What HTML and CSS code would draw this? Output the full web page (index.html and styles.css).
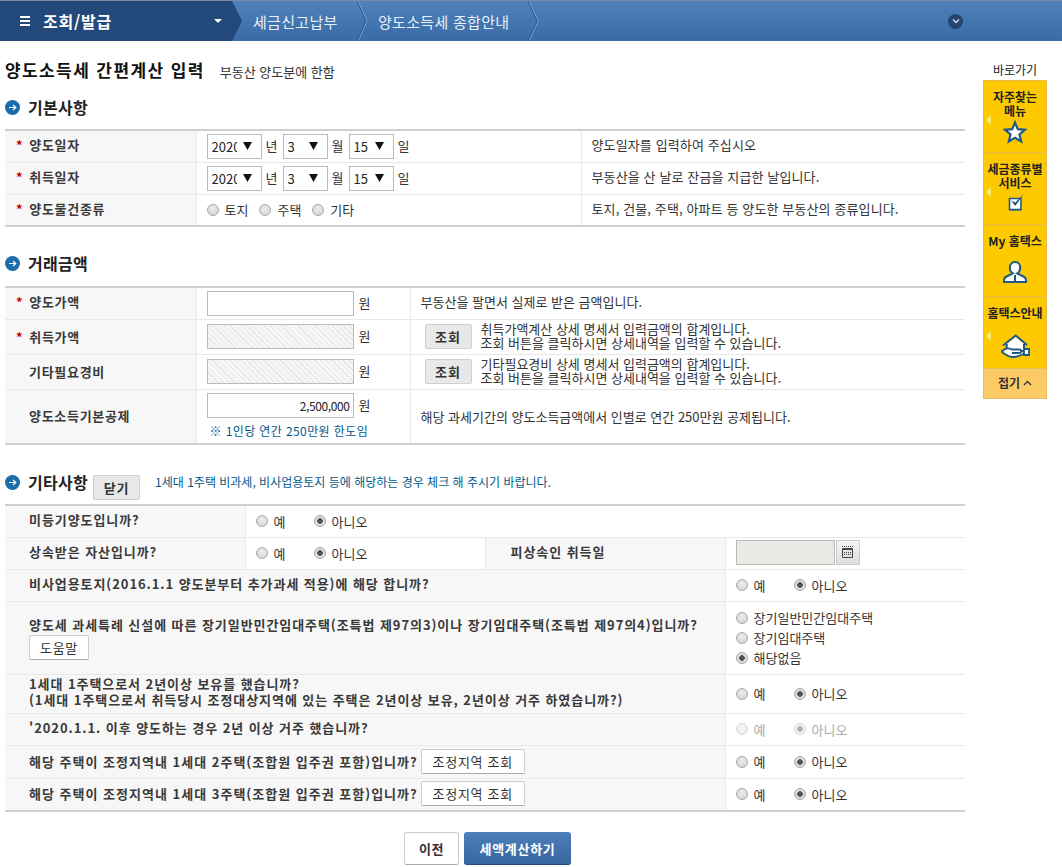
FILE: index.html
```html
<!DOCTYPE html>
<html lang="ko">
<head>
<meta charset="utf-8">
<title>양도소득세 간편계산 입력</title>
<link rel="stylesheet" href="styles.css">
</head>
<body>
<header class="topbar">
  <div class="crumb-main">
    <span class="burger"><i></i><i></i><i></i></span>
    <span class="crumb-main-text">조회/발급</span>
    <span class="caret"></span>
  </div>
  <div class="crumb crumb-1">세금신고납부<svg class="chev" width="11" height="40" viewBox="0 0 11 40"><path d="M1 0 10 20 1 40" fill="none" stroke="#7fa5d0" stroke-width="1"/><path d="M0 0 9 20 0 40" fill="none" stroke="#2a5788" stroke-width="1"/></svg></div>
  <div class="crumb crumb-2">양도소득세 종합안내<svg class="chev" width="11" height="40" viewBox="0 0 11 40"><path d="M1 0 10 20 1 40" fill="none" stroke="#7fa5d0" stroke-width="1"/><path d="M0 0 9 20 0 40" fill="none" stroke="#2a5788" stroke-width="1"/></svg></div>
  <div class="crumb-rest">
    <span class="round-down"><svg width="14" height="14" viewBox="0 0 14 14"><path d="M4 5.500 7 8.500 10 5.500" fill="none" stroke="#d5dee8" stroke-width="1.300"/></svg></span>
  </div>
</header>

<div class="page">
<main class="main">
  <div class="title-row"><h1>양도소득세 간편계산 입력</h1><span class="title-sub">부동산 양도분에 한함</span></div>

  <h2 class="sec sec-first"><svg class="sec-ico" width="15" height="15" viewBox="0 0 15 15"><circle cx="7.500" cy="7.500" r="7.500" fill="#1b6ca8"/><path d="M4 7.500H10.500M8 5 10.800 7.500 8 10" fill="none" stroke="#fff" stroke-width="1.200"/></svg>기본사항</h2>
  <table class="tbl t1">
    <colgroup><col class="c1a"><col class="c1b"><col></colgroup>
    <tr>
      <th><em>*</em>양도일자</th>
      <td><div class="date-row"><select class="sel sel-y"><option>2020</option></select><span>년</span><select class="sel sel-m"><option>3</option></select><span>월</span><select class="sel sel-d"><option>15</option></select><span>일</span></div></td>
      <td class="desc">양도일자를 입력하여 주십시오</td>
    </tr>
    <tr>
      <th><em>*</em>취득일자</th>
      <td><div class="date-row"><select class="sel sel-y"><option>2020</option></select><span>년</span><select class="sel sel-m"><option>3</option></select><span>월</span><select class="sel sel-d"><option>15</option></select><span>일</span></div></td>
      <td class="desc">부동산을 산 날로 잔금을 지급한 날입니다.</td>
    </tr>
    <tr>
      <th><em>*</em>양도물건종류</th>
      <td><div class="radios r-tight"><label><input type="radio" name="k">토지</label><label><input type="radio" name="k">주택</label><label><input type="radio" name="k">기타</label></div></td>
      <td class="desc">토지, 건물, 주택, 아파트 등 양도한 부동산의 종류입니다.</td>
    </tr>
  </table>

  <h2 class="sec sec-second"><svg class="sec-ico" width="15" height="15" viewBox="0 0 15 15"><circle cx="7.500" cy="7.500" r="7.500" fill="#1b6ca8"/><path d="M4 7.500H10.500M8 5 10.800 7.500 8 10" fill="none" stroke="#fff" stroke-width="1.200"/></svg>거래금액</h2>
  <table class="tbl t2">
    <colgroup><col class="c1a"><col class="c2b"><col></colgroup>
    <tr class="h32">
      <th><em>*</em>양도가액</th>
      <td><div class="amt"><input class="inp" type="text"><span>원</span></div></td>
      <td class="desc">부동산을 팔면서 실제로 받은 금액입니다.</td>
    </tr>
    <tr class="h35">
      <th><em>*</em>취득가액</th>
      <td><div class="amt"><input class="inp inp-off" type="text" disabled><span>원</span></div></td>
      <td class="desc"><div class="desc-btn"><button class="btn-gray" type="button">조회</button><p>취득가액계산 상세 명세서 입력금액의 합계입니다.<br>조회 버튼을 클릭하시면 상세내역을 입력할 수 있습니다.</p></div></td>
    </tr>
    <tr class="h35">
      <th class="no-req">기타필요경비</th>
      <td><div class="amt"><input class="inp inp-off" type="text" disabled><span>원</span></div></td>
      <td class="desc"><div class="desc-btn"><button class="btn-gray" type="button">조회</button><p>기타필요경비 상세 명세서 입력금액의 합계입니다.<br>조회 버튼을 클릭하시면 상세내역을 입력할 수 있습니다.</p></div></td>
    </tr>
    <tr class="h55">
      <th class="no-req">양도소득기본공제</th>
      <td><div class="amt"><input class="inp inp-num" type="text" value="2,500,000"><span>원</span></div><div class="limit">※ 1인당 연간 250만원 한도임</div></td>
      <td class="desc">해당 과세기간의 양도소득금액에서 인별로 연간 250만원 공제됩니다.</td>
    </tr>
  </table>

  <div class="sec-row">
    <h2 class="sec sec-inline"><svg class="sec-ico" width="15" height="15" viewBox="0 0 15 15"><circle cx="7.500" cy="7.500" r="7.500" fill="#1b6ca8"/><path d="M4 7.500H10.500M8 5 10.800 7.500 8 10" fill="none" stroke="#fff" stroke-width="1.200"/></svg>기타사항</h2>
    <button class="btn-gray btn-close" type="button">닫기</button>
    <span class="sec-note">1세대 1주택 비과세, 비사업용토지 등에 해당하는 경우 체크 해 주시기 바랍니다.</span>
  </div>
  <table class="tbl t3">
    <colgroup><col class="c3"><col class="c3"><col class="c3"><col></colgroup>
    <tr class="h32">
      <th class="no-req">미등기양도입니까?</th>
      <td colspan="3"><div class="radios r-yn"><label><input type="radio" name="a">예</label><label><input type="radio" name="a" checked>아니오</label></div></td>
    </tr>
    <tr class="h32">
      <th class="no-req">상속받은 자산입니까?</th>
      <td><div class="radios r-yn"><label><input type="radio" name="b">예</label><label><input type="radio" name="b" checked>아니오</label></div></td>
      <th class="th-sub">피상속인 취득일</th>
      <td class="td-cal"><div class="cal"><input class="inp-cal" type="text" disabled><button class="cal-btn" type="button" aria-label="달력"><svg width="11" height="12" viewBox="0 0 11 12"><path d="M0 .5h1M2 .5h1M4 .5h1M6 .5h1M8 .5h1M10 .5h1" stroke="#444"/><path d="M.5 2.500h10v9H.5z" fill="#e4e4e4" stroke="#444"/><path d="M.5 3.500h10" stroke="#444"/><path d="M2 6.500h7M2 8.500h7" stroke="#444" stroke-dasharray="1 1"/></svg></button></div></td>
    </tr>
    <tr class="h32">
      <th class="no-req" colspan="3">비사업용토지(2016.1.1 양도분부터 추가과세 적용)에 해당 합니까?</th>
      <td><div class="radios r-yn"><label><input type="radio" name="c">예</label><label><input type="radio" name="c" checked>아니오</label></div></td>
    </tr>
    <tr class="h73">
      <th class="no-req th-help" colspan="3">양도세 과세특례 신설에 따른 장기일반민간임대주택(조특법 제97의3)이나 장기임대주택(조특법 제97의4)입니까?<br><button class="btn-white btn-help" type="button">도움말</button></th>
      <td><div class="radios r-col"><label><input type="radio" name="d">장기일반민간임대주택</label><label><input type="radio" name="d">장기임대주택</label><label><input type="radio" name="d" checked>해당없음</label></div></td>
    </tr>
    <tr class="h39">
      <th class="no-req th-tight" colspan="3">1세대 1주택으로서 2년이상 보유를 했습니까?<br>(1세대 1주택으로서 취득당시 조정대상지역에 있는 주택은 2년이상 보유, 2년이상 거주 하였습니까?)</th>
      <td><div class="radios r-yn"><label><input type="radio" name="e">예</label><label><input type="radio" name="e" checked>아니오</label></div></td>
    </tr>
    <tr class="h32">
      <th class="no-req" colspan="3">'2020.1.1. 이후 양도하는 경우 2년 이상 거주 했습니까?</th>
      <td><div class="radios r-yn r-off"><label><input type="radio" name="f" disabled>예</label><label><input type="radio" name="f" checked disabled>아니오</label></div></td>
    </tr>
    <tr class="h33">
      <th class="no-req th-q" colspan="3"><span class="q-btn">해당 주택이 조정지역내 1세대 2주택(조합원 입주권 포함)입니까?<button class="btn-white btn-area" type="button">조정지역 조회</button></span></th>
      <td><div class="radios r-yn"><label><input type="radio" name="g">예</label><label><input type="radio" name="g" checked>아니오</label></div></td>
    </tr>
    <tr class="h33">
      <th class="no-req th-q" colspan="3"><span class="q-btn">해당 주택이 조정지역내 1세대 3주택(조합원 입주권 포함)입니까?<button class="btn-white btn-area" type="button">조정지역 조회</button></span></th>
      <td><div class="radios r-yn"><label><input type="radio" name="h">예</label><label><input type="radio" name="h" checked>아니오</label></div></td>
    </tr>
  </table>

  <div class="actions">
    <button class="btn-prev" type="button">이전</button>
    <button class="btn-calc" type="button">세액계산하기</button>
  </div>
</main>

<aside class="quick">
  <div class="quick-title">바로가기</div>
  <a class="q-item"><span class="q-tri"></span><span class="q-text">자주찾는<br>메뉴</span>
    <svg class="q-ico" width="24" height="24" viewBox="0 0 24 24"><path d="M12 2.500 14.800 9.200 22 9.800 16.500 14.500 18.200 21.500 12 17.800 5.800 21.500 7.500 14.500 2 9.800 9.200 9.200Z" fill="#fff" stroke="#1f5a85" stroke-width="2.200"/></svg></a>
  <a class="q-item"><span class="q-tri"></span><span class="q-text">세금종류별<br>서비스</span>
    <svg class="q-ico" width="24" height="24" viewBox="0 0 24 24"><path d="M6.500 6.500h11.500v11H6.500z" fill="#fff" stroke="#1f5a85" stroke-width="1.600"/><path d="M6 17h12.500v1.500H6z" fill="#1f5a85"/><path d="M8 8.500 12.200 14 21 2 12.200 10.500Z" fill="#1f5a85"/></svg></a>
  <a class="q-item"><span class="q-text">My 홈택스</span>
    <svg class="q-ico q-person" width="26" height="26" viewBox="0 0 26 26"><path d="M13 2c3.200 0 5.200 2.400 5.200 5.400 0 2.600-1.400 5-3 6l6.300 3.100c1.600.8 2.500 2 2.500 3.500v2H2v-2c0-1.500.9-2.700 2.500-3.500l6.300-3.100c-1.600-1-3-3.400-3-6C7.800 4.400 9.800 2 13 2Z" fill="#fff" stroke="#1f5a85" stroke-width="2"/><path d="M13 15v6" stroke="#1f5a85" stroke-width="2"/></svg></a>
  <a class="q-item"><span class="q-tri"></span><span class="q-text">홈택스안내</span>
    <svg class="q-ico q-house" width="30" height="26" viewBox="0 0 30 26"><path d="M15.700 3 6.700 10V16H24V10Z" fill="#fff"/><path d="M3 11.500 15.700 1.500 27 11M6.700 10V14.500M24 10V15" fill="none" stroke="#1f5a85" stroke-width="2"/><path d="M2 18C5 20 8 23 13 23 17 23 21 21.500 24 19.500V17H2Z" fill="#fff" stroke="#1f5a85" stroke-width="1.800"/><path d="M2 17.500C5 14 9 14 12 15.500H19C22 15.500 22 19 19 19H12" fill="#fff" stroke="#1f5a85" stroke-width="1.800"/><path d="M24 15H29V21H24Z" fill="#fff" stroke="#1f5a85" stroke-width="1.800"/></svg></a>
  <a class="q-fold">접기 <svg width="9" height="6" viewBox="0 0 9 6"><path d="M1 5 4.500 1.500 8 5" fill="none" stroke="#333" stroke-width="1.300"/></svg></a>
</aside>
</div>
</body>
</html>
```
FILE: styles.css
```css
* { box-sizing: border-box; }
html, body { margin: 0; padding: 0; background: #fff; }
body { font-family: "Noto Sans CJK KR", "Noto Sans", sans-serif; font-size: 13px; color: #333; overflow: hidden; height: 867px; }
button, input, select { font-family: inherit; }

.topbar { display: flex; height: 41px; border-top: 1px solid #7a8ba0; background: linear-gradient(#4f81bc, #3a6ba5); color: #fff; }
.crumb-main { width: 242px; flex: none; display: flex; align-items: center; background: #22497a; clip-path: polygon(0 0, 232px 0, 242px 50%, 232px 100%, 0 100%); padding-left: 20px; }
.burger { display: flex; flex-direction: column; gap: 2px; width: 10px; margin-right: 13px; }
.burger i { display: block; height: 2px; background: #fff; }
.crumb-main-text { font-size: 16px; font-weight: 700; width: 171px; letter-spacing: .8px; }
.caret { width: 0; height: 0; border: 4px solid transparent; border-top: 4px solid #fff; border-bottom: 0; }
.crumb { position: relative; flex: none; font-size: 15px; letter-spacing: .3px; display: flex; align-items: center; height: 100%; color: #e8f0f8; }
.chev { position: absolute; right: -1px; top: 0; }
.crumb-1 { width: 125px; padding-left: 11px; }
.crumb-2 { width: 171px; padding-left: 11px; }
.crumb-rest { flex: 1; display: flex; align-items: center; justify-content: flex-end; padding-right: 99px; }
.round-down { width: 15px; height: 15px; border-radius: 50%; background: #24456e; display: flex; align-items: center; justify-content: center; }

.page { display: flex; }
.main { width: 960px; margin-left: 5px; }

.title-row { display: flex; align-items: baseline; height: 33px; padding-top: 18px; }
h1 { margin: 0; font-size: 17px; font-weight: 700; color: #111; letter-spacing: 1.400px; line-height: 22px; }
.title-sub { font-size: 13px; margin-left: 15px; color: #333; }

.sec { display: flex; align-items: center; gap: 8px; margin: 0; font-size: 16px; font-weight: 700; color: #222; line-height: 20px; letter-spacing: .3px; }
.sec-first { margin-top: 23px; margin-bottom: 12px; }
.sec-second { margin-top: 26px; margin-bottom: 13px; }
.sec-row { display: flex; align-items: center; margin-top: 25px; height: 24px; margin-bottom: 10px; }
.sec-note { margin-left: 15px; color: #00598a; font-size: 12px; margin-top: -2px; margin-bottom: 0; }

.tbl { width: 960px; table-layout: fixed; border-collapse: collapse; border-top: 2px solid #cfcfcf; border-bottom: 2px solid #cfcfcf; }
.tbl th, .tbl td { padding: 0; border-bottom: 1px solid #e8e8e8; }
.tbl th { background: #f7f7f7; text-align: left; font-weight: 700; font-size: 13px; color: #3a3a3a; padding-left: 11px; letter-spacing: .7px; border-right: 1px solid #e8e8e8; }
.tbl td { border-right: 1px solid #e8e8e8; padding-left: 10px; }
.tbl td:last-child { border-right: 0; }
.tbl th em { color: #c00; font-style: normal; margin-right: 6px; }
.tbl th.no-req { padding-left: 24px; }
.tbl th.th-sub { padding-left: 25px; }
.c1a { width: 191px; }
.c1b { width: 385px; }
.c2b { width: 214px; }
.c3 { width: 240px; }
.t1 tr { height: 32px; }
.h32 { height: 32px; }
.h33 { height: 33px; }
.h35 { height: 35px; }
.h39 { height: 39px; }
.h55 { height: 55px; }
.h73 { height: 73px; }

.desc { font-size: 13px; }
.tbl.t1 th, .tbl.t1 td.desc { padding-bottom: 3px; }
.t1 .desc { letter-spacing: .12px; }
.tbl.t2 th { padding-bottom: 1px; }
.tbl.t2 .h32 th, .tbl.t2 .h32 td.desc { padding-bottom: 3px; }
.tbl.t3 th { padding-bottom: 3px; letter-spacing: .93px; }
.tbl.t3 th.th-help { padding-bottom: 0; }
.tbl.t3 th.th-q { padding-bottom: 1px; letter-spacing: 1px; }

.date-row { display: flex; align-items: center; gap: 4px; }
.date-row span { margin-top: -2px; width: 13px; }
.sel { appearance: none; height: 25px; border: 1px solid #bbb; background: #fff; font-size: 13px; color: #222; padding: 0 22px 0 4px; border-radius: 0; background-image: url("data:image/svg+xml,%3Csvg xmlns='http://www.w3.org/2000/svg' width='9' height='8'%3E%3Cpath d='M0 0h9L4.500 8z' fill='%23111'/%3E%3C/svg%3E"); background-repeat: no-repeat; background-position: right 9px center; }
.sel-y { width: 55px; padding-right: 24px; }
.sel-m { width: 45px; }
.sel-d { width: 45px; }

.radios { display: flex; align-items: center; }
.radios label { display: flex; align-items: center; font-size: 13px; }
.radios input, .radios input[type=radio] { appearance: none; width: 12px; height: 12px; border-radius: 50%; margin: 0 6px 0 0; border: 1px solid #aaa; background: radial-gradient(circle at 50% 35%, #eee, #cfcfcf); }
.radios input:checked { background: radial-gradient(circle, #505050 0 2.500px, #dcdcdc 3px); }
.r-tight label { margin-right: 11px; }
.r-yn label:first-child { width: 58px; }
.r-col { flex-direction: column; align-items: flex-start; gap: 2px; }
.r-col label { height: 18px; }
.r-off label { color: #aaa; }
.r-off input, .r-off input[type=radio] { opacity: .45; }

.amt { display: flex; align-items: center; gap: 5px; }
.amt span { margin-top: -2px; }
.inp { width: 147px; height: 25px; border: 1px solid #bbb; background: #fff; font-size: 13px; padding: 0 3px; }
.inp-off { background: repeating-linear-gradient(45deg, #f6f6f6 0 3px, #e6e6e6 3px 4px); }
.inp-num { text-align: right; color: #222; font-size: 12px; letter-spacing: -.4px; }
.limit { color: #00598a; font-size: 12px; margin: 4px 0 0 3px; line-height: 18px; letter-spacing: .4px; }
.desc-btn { display: flex; align-items: center; gap: 9px; padding-left: 4px; margin-top: -1px; }
.desc-btn p { margin: 0; line-height: 14px; }
.btn-gray { width: 47px; height: 25px; border: 1px solid #d0d0d0; border-radius: 2px; background: #e8e8e8; font-size: 13px; font-weight: 700; color: #333; padding: 0; letter-spacing: 1px; }
.btn-close { height: 25px; margin-left: 5px; margin-top: 10px; }
.btn-white { height: 25px; border: 1px solid #ccc; border-bottom-color: #aaa; border-radius: 2px; background: #fff; color: #333; font-size: 13px; font-weight: 400; padding: 0; letter-spacing: .7px; }
.btn-help { width: 60px; margin-top: 1px; }
.btn-area { width: 104px; margin-left: 3px; }
.q-btn { display: flex; align-items: center; }
.th-tight { line-height: 16px; }
.tbl td.td-cal { padding-bottom: 2px; }
.cal { display: flex; height: 25px; gap: 1px; }
.inp-cal { width: 99px; height: 25px; border: 1px solid #bbb; background: #eaeae4; }
.cal-btn { width: 24px; height: 25px; border: 1px solid #ccc; background: linear-gradient(#f4f4f4, #ddd); padding: 0; display: flex; align-items: center; justify-content: center; }

.actions { display: flex; justify-content: center; gap: 5px; margin-top: 20px; padding-left: 5px; }
.btn-prev { width: 55px; height: 33px; border: 1px solid #ccc; border-bottom-color: #aaa; border-radius: 3px; background: #fff; font-size: 13px; font-weight: 700; color: #333; letter-spacing: .5px; padding: 0; }
.btn-calc { width: 107px; height: 33px; border: 0; border-bottom: 1px solid #22497a; border-radius: 3px; background: linear-gradient(#4d7fbb, #36679f); color: #fff; font-size: 13px; font-weight: 700; letter-spacing: .7px; padding: 0; }

.quick { width: 64px; margin-left: 18px; margin-top: 22px; }
.quick-title { text-align: center; font-size: 12px; height: 17px; line-height: 14px; color: #222; }
.q-item { position: relative; display: block; height: 72px; background: #fdca02; border: 1px solid #e8b94e; border-bottom: 0; text-align: center; }
.q-text { display: block; padding-top: 9px; font-size: 12px; font-weight: 700; line-height: 14px; color: #222; }
.q-tri { position: absolute; left: 2px; top: 34px; width: 0; height: 0; border: 5px solid transparent; border-left: 0; border-right-color: #ffe97a; }
.q-ico { position: absolute; left: 50%; transform: translateX(-50%); bottom: 8px; }
.q-person { bottom: 10px; }
.q-house { bottom: 8px; }
.q-fold { display: flex; align-items: center; justify-content: center; gap: 3px; height: 31px; padding-bottom: 2px; background: #fdcb66; border: 1px solid #e0c060; font-size: 12px; font-weight: 700; color: #333; }
```
